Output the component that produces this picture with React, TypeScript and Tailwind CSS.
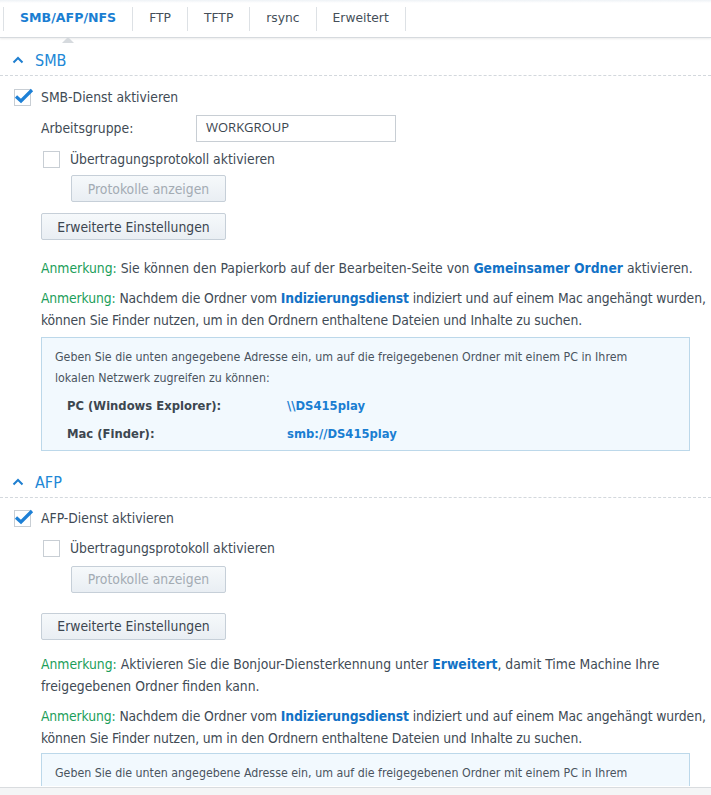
import React from "react";

const FONT = { fontFamily: '"DejaVu Sans Condensed", "DejaVu Sans", Verdana, sans-serif' };
const WIDE = { fontFamily: '"DejaVu Sans", Verdana, sans-serif' };

function Chevron() {
  return (
    <svg width="12" height="8" viewBox="0 0 12 8" className="shrink-0">
      <path d="M1.5 6.5 L6 2 L10.5 6.5" fill="none" stroke="#1f7fd0" strokeWidth="2" />
    </svg>
  );
}

function Checkbox({ checked }: { checked?: boolean }) {
  return (
    <span className="relative inline-block w-[17px] h-[17px] border border-[#c8ced4] bg-white shrink-0">
      {checked && (
        <svg width="20" height="16" viewBox="0 0 20 16" className="absolute left-[-1px] top-[-2px]">
          <path d="M2 8.5 L7 13 L18 2" fill="none" stroke="#1d80d6" strokeWidth="3.2" strokeLinejoin="miter" />
        </svg>
      )}
    </span>
  );
}

function Button({ label, disabled, width }: { label: string; disabled?: boolean; width: string }) {
  return (
    <button
      className={`${width} h-[27px] border border-[#c6cfd8] rounded-[2px] bg-gradient-to-b from-[#f6f9fb] to-[#e9eef3] text-[13.8px] ${
        disabled ? "text-[#a3abb3]" : "text-[#3c4650]"
      }`}
    >
      {label}
    </button>
  );
}

function Note({ children, tight }: { children: React.ReactNode; tight?: boolean }) {
  return (
    <p className={`text-[13.8px] leading-[22px] text-[#414b55] whitespace-nowrap ${tight ? "tracking-[-0.12px]" : ""}`}>
      <span className="text-[#1b9e5a]">Anmerkung:</span> {children}
    </p>
  );
}

function Link({ children }: { children: React.ReactNode }) {
  return <span className="font-bold text-[#1272c6]">{children}</span>;
}

function SectionHeader({ title }: { title: string }) {
  return (
    <div className="flex items-center gap-[11px] pl-[12px] h-[35px] border-b border-dashed border-[#d3d8dd] pt-[3px]">
      <Chevron />
      <span className="text-[16px] text-[#2187d6] pt-[2px]">{title}</span>
    </div>
  );
}

function InfoBox({ rows, cut }: { rows?: [string, string][]; cut?: boolean }) {
  return (
    <div
      className={`ml-[41px] mr-[21px] border border-[#bcd8ea] bg-[#f2f9fe] px-[13px] pt-[9px] ${
        cut ? "border-b-0 h-[33px] overflow-hidden" : "pb-[2px]"
      }`}
    >
      <p className="text-[12.3px] leading-[21px] text-[#4a545e]">
        Geben Sie die unten angegebene Adresse ein, um auf die freigegebenen Ordner mit einem PC in Ihrem
        {!cut && (
          <>
            <br />
            lokalen Netzwerk zugreifen zu können:
          </>
        )}
      </p>
      {rows && (
        <div className="mt-[3px] pl-[12px]">
          {rows.map(([k, v]) => (
            <div key={k} className="flex h-[28px] items-center text-[11.6px]" style={WIDE}>
              <span className="w-[220px] font-bold text-[#3d4750]">{k}</span>
              <span className="font-bold text-[#1a7ed2]">{v}</span>
            </div>
          ))}
        </div>
      )}
    </div>
  );
}

function IndexNote() {
  return (
    <Note tight>
      Nachdem die Ordner vom <Link>Indizierungsdienst</Link> indiziert und auf einem Mac angehängt wurden,
      <br />
      können Sie Finder nutzen, um in den Ordnern enthaltene Dateien und Inhalte zu suchen.
    </Note>
  );
}

export default function App() {
  const tabs = ["SMB/AFP/NFS", "FTP", "TFTP", "rsync", "Erweitert"];
  return (
    <div className="w-[711px] h-[795px] overflow-hidden bg-white relative" style={FONT}>
      {/* Tabs */}
      <div className="h-[38px] bg-white border-b border-[#d6dade] shadow-[0_1px_2px_rgba(0,0,0,0.08)] relative">
        <div className="absolute inset-x-0 top-0 h-[3px] bg-gradient-to-b from-[#eef2f6] to-white" />
        <div className="flex h-full items-center pl-[3px]">
          {tabs.map((t, i) => (
            <div
              key={t}
              className={`relative flex items-center h-[24px] px-[16px] border-l border-[#dde1e5] ${
                i === tabs.length - 1 ? "border-r" : ""
              }`}
            >
              <span
                className={i === 0 ? "font-bold text-[#1a7ed2] text-[12.6px]" : "text-[#454f59] text-[12.3px]"}
                style={WIDE}
              >
                {t}
              </span>
              {i === 0 && (
                <span className="absolute left-1/2 -translate-x-1/2 bottom-[-12px] w-0 h-0 border-x-[6px] border-x-transparent border-b-[6px] border-b-[#d6dade]" />
              )}
            </div>
          ))}
        </div>
      </div>

      {/* SMB */}
      <div className="pt-[3px]">
        <SectionHeader title="SMB" />
        <div className="pt-[11px] text-[13.8px] text-[#414b55]">
          <label className="flex items-center gap-[10px] pl-[14px]">
            <Checkbox checked />
            <span>SMB-Dienst aktivieren</span>
          </label>
          <div className="flex items-center pl-[41px] mt-[7px]">
            <span className="w-[155px]">Arbeitsgruppe:</span>
            <div
              className="w-[200px] h-[27px] border border-[#c8ced4] flex items-center px-[9px] text-[13px] text-[#3c4650]"
              style={{ fontFamily: '"Open Sans", sans-serif' }}
            >
              WORKGROUP
            </div>
          </div>
          <label className="flex items-center gap-[10px] pl-[43px] mt-[7px]">
            <Checkbox />
            <span>Übertragungsprotokoll aktivieren</span>
          </label>
          <div className="pl-[71px] mt-[6px]">
            <Button label="Protokolle anzeigen" disabled width="w-[155px]" />
          </div>
          <div className="pl-[41px] mt-[11px]">
            <Button label="Erweiterte Einstellungen" width="w-[185px]" />
          </div>
          <div className="pl-[41px] mt-[17px] flex flex-col gap-[8px]">
            <Note>
              Sie können den Papierkorb auf der Bearbeiten-Seite von <Link>Gemeinsamer Ordner</Link> aktivieren.
            </Note>
            <IndexNote />
          </div>
          <div className="mt-[6px]">
            <InfoBox
              rows={[
                ["PC (Windows Explorer):", "\\\\DS415play"],
                ["Mac (Finder):", "smb://DS415play"],
              ]}
            />
          </div>
        </div>
      </div>

      {/* AFP */}
      <div className="pt-[12px]">
        <SectionHeader title="AFP" />
        <div className="pt-[10px] text-[13.8px] text-[#414b55]">
          <label className="flex items-center gap-[10px] pl-[14px]">
            <Checkbox checked />
            <span>AFP-Dienst aktivieren</span>
          </label>
          <label className="flex items-center gap-[10px] pl-[43px] mt-[9px]">
            <Checkbox />
            <span>Übertragungsprotokoll aktivieren</span>
          </label>
          <div className="pl-[71px] mt-[7px]">
            <Button label="Protokolle anzeigen" disabled width="w-[155px]" />
          </div>
          <div className="pl-[41px] mt-[20px]">
            <Button label="Erweiterte Einstellungen" width="w-[185px]" />
          </div>
          <div className="pl-[41px] mt-[13px] flex flex-col gap-[8px]">
            <Note>
              Aktivieren Sie die Bonjour-Diensterkennung unter <Link>Erweitert</Link>, damit Time Machine Ihre
              <br />
              freigegebenen Ordner finden kann.
            </Note>
            <IndexNote />
          </div>
          <div className="mt-[4px]">
            <InfoBox cut />
          </div>
        </div>
      </div>

      {/* bottom edge */}
      <div className="absolute inset-x-0 bottom-0 h-[8px] bg-[#f4f5f6] border-t border-[#d9dcdf]" />
    </div>
  );
}
